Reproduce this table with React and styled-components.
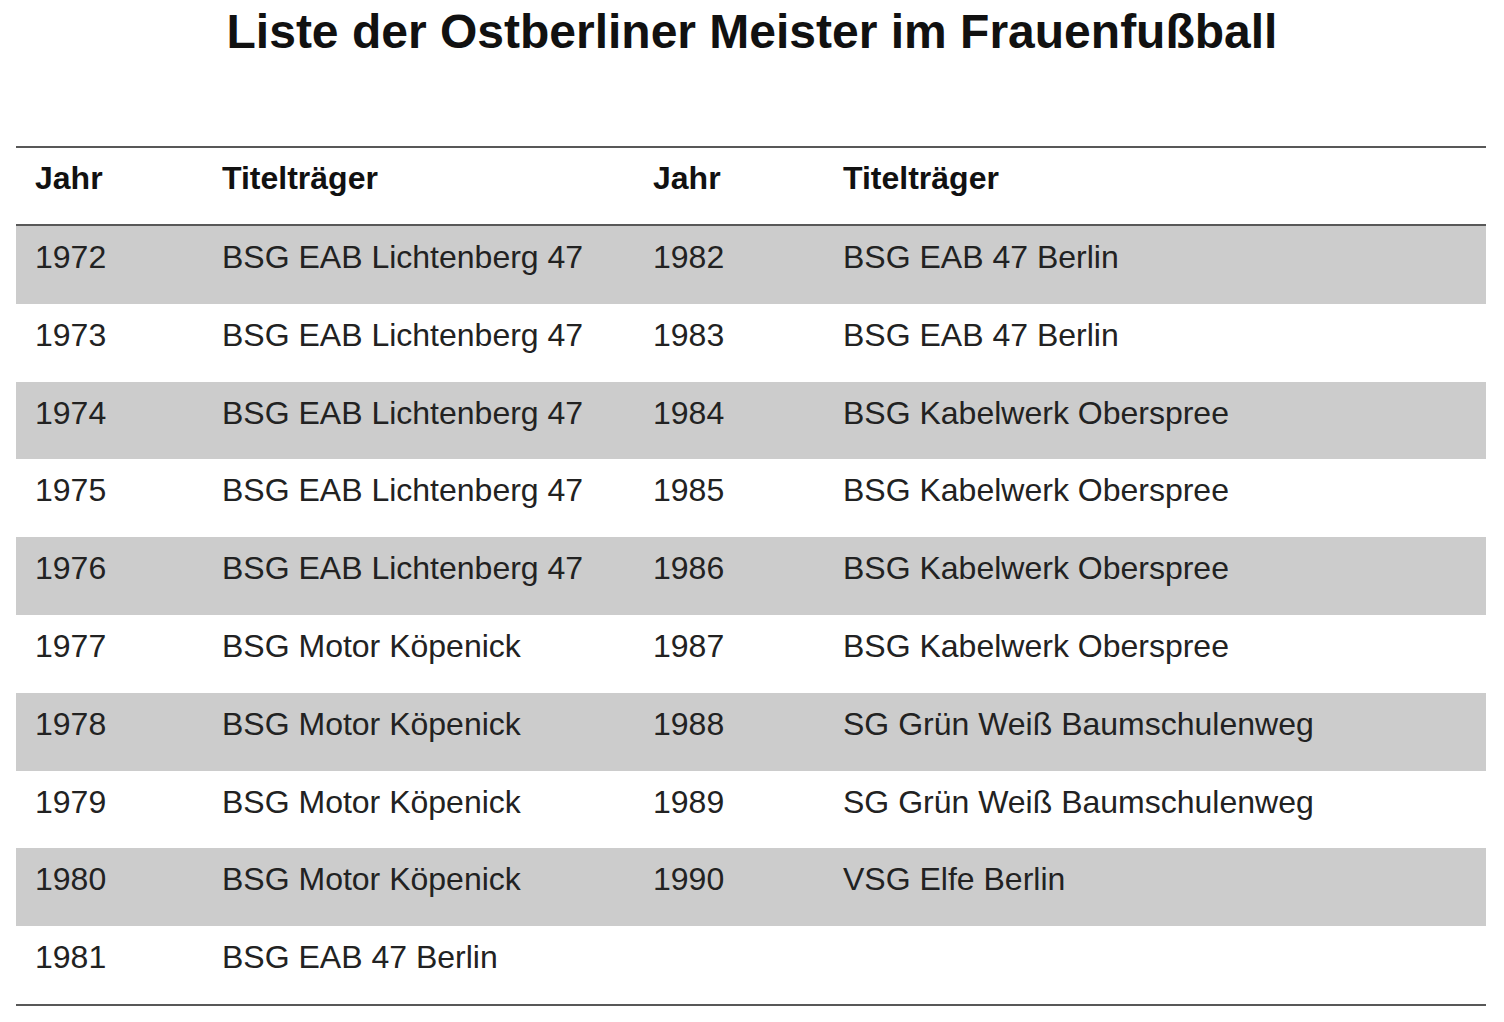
import React from 'react';
import styled, { createGlobalStyle } from 'styled-components';

const GlobalStyle = createGlobalStyle`
  html, body { margin: 0; padding: 0; background: #fff; }
  body { font-family: "Liberation Sans", Arial, sans-serif; color: #222; }
`;

const Page = styled.div`
  width: 1504px;
  padding-top: 8px;
`;

const Title = styled.h1`
  margin: 0;
  font-size: 48px;
  line-height: 48px;
  font-weight: 700;
  color: #111;
  text-align: center;
`;

const Table = styled.div`
  margin: 90px 0 0 16px;
  width: 1470px;
  border-top: 2px solid #585858;
  border-bottom: 2px solid #585858;
  display: grid;
  grid-template-columns: 187px 431px 190px 1fr;
`;

const HeadCell = styled.div`
  height: 78px;
  box-sizing: border-box;
  padding: 14px 0 0 19px;
  font-size: 32px;
  line-height: 32px;
  font-weight: 700;
  color: #111;
  border-bottom: 2px solid #585858;
`;

const Cell = styled.div`
  height: 77.8px;
  box-sizing: border-box;
  padding: 15px 0 0 19px;
  font-size: 32px;
  line-height: 32px;
  color: #222;
  white-space: nowrap;
  background: ${(p) => (p.$shaded ? '#cccccc' : '#ffffff')};
`;

const rows = [
  ['1972', 'BSG EAB Lichtenberg 47', '1982', 'BSG EAB 47 Berlin'],
  ['1973', 'BSG EAB Lichtenberg 47', '1983', 'BSG EAB 47 Berlin'],
  ['1974', 'BSG EAB Lichtenberg 47', '1984', 'BSG Kabelwerk Oberspree'],
  ['1975', 'BSG EAB Lichtenberg 47', '1985', 'BSG Kabelwerk Oberspree'],
  ['1976', 'BSG EAB Lichtenberg 47', '1986', 'BSG Kabelwerk Oberspree'],
  ['1977', 'BSG Motor Köpenick', '1987', 'BSG Kabelwerk Oberspree'],
  ['1978', 'BSG Motor Köpenick', '1988', 'SG Grün Weiß Baumschulenweg'],
  ['1979', 'BSG Motor Köpenick', '1989', 'SG Grün Weiß Baumschulenweg'],
  ['1980', 'BSG Motor Köpenick', '1990', 'VSG Elfe Berlin'],
  ['1981', 'BSG EAB 47 Berlin', '', ''],
];

export default function App() {
  return (
    <Page>
      <GlobalStyle />
      <Title>Liste der Ostberliner Meister im Frauenfußball</Title>
      <Table>
        <HeadCell>Jahr</HeadCell>
        <HeadCell>Titelträger</HeadCell>
        <HeadCell>Jahr</HeadCell>
        <HeadCell>Titelträger</HeadCell>
        {rows.map((row, i) =>
          row.map((text, j) => (
            <Cell key={`${i}-${j}`} $shaded={i % 2 === 0}>
              {text}
            </Cell>
          ))
        )}
      </Table>
    </Page>
  );
}
